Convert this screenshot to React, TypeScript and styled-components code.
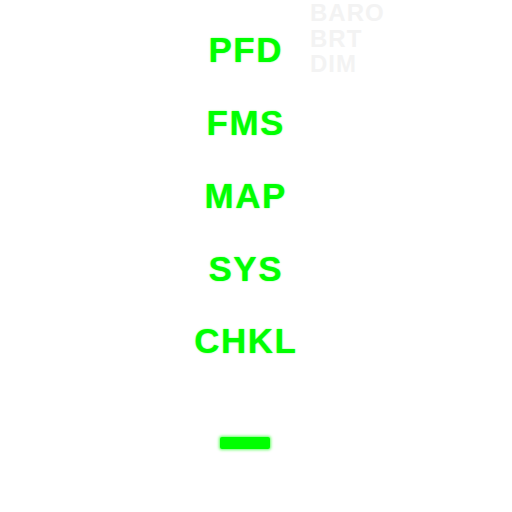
import React from "react";
import styled, { createGlobalStyle } from "styled-components";

const Global = createGlobalStyle`
  html, body { margin: 0; padding: 0; background: #ffffff; }
  body { font-family: "Liberation Sans", Arial, sans-serif; }
`;

const Panel = styled.div`
  position: relative;
  width: 512px;
  height: 512px;
  background: #ffffff;
  overflow: hidden;
`;

const Menu = styled.nav`
  width: 490px;
  display: flex;
  flex-direction: column;
  align-items: center;
  padding-top: 13.6px;
`;

const MenuItem = styled.div`
  height: 72.75px;
  display: flex;
  align-items: center;
  justify-content: center;
  font-size: 35px;
  font-weight: 700;
  letter-spacing: 1.5px;
  padding-left: 1.5px;
  color: #00ff00;
  line-height: 1;
  text-shadow: 0 0 1.5px rgba(0, 255, 0, 0.7);
`;

const Indicator = styled.div`
  margin-top: 60px;
  width: 50px;
  height: 12px;
  border-radius: 2px;
  background: #00ff00;
  box-shadow: 0 0 3px 1px rgba(0, 255, 0, 0.6);
`;

const Legend = styled.div`
  position: absolute;
  left: 310px;
  top: 0;
  display: flex;
  flex-direction: column;
  font-size: 24px;
  font-weight: 700;
  letter-spacing: 1px;
  line-height: 25.5px;
  color: #f3f3f3;
`;

const items = ["PFD", "FMS", "MAP", "SYS", "CHKL"];

export default function App() {
  return (
    <>
      <Global />
      <Panel>
        <Menu>
          {items.map((t) => (
            <MenuItem key={t}>{t}</MenuItem>
          ))}
          <Indicator />
        </Menu>
        <Legend>
          <span>BARO</span>
          <span>BRT</span>
          <span>DIM</span>
        </Legend>
      </Panel>
    </>
  );
}
